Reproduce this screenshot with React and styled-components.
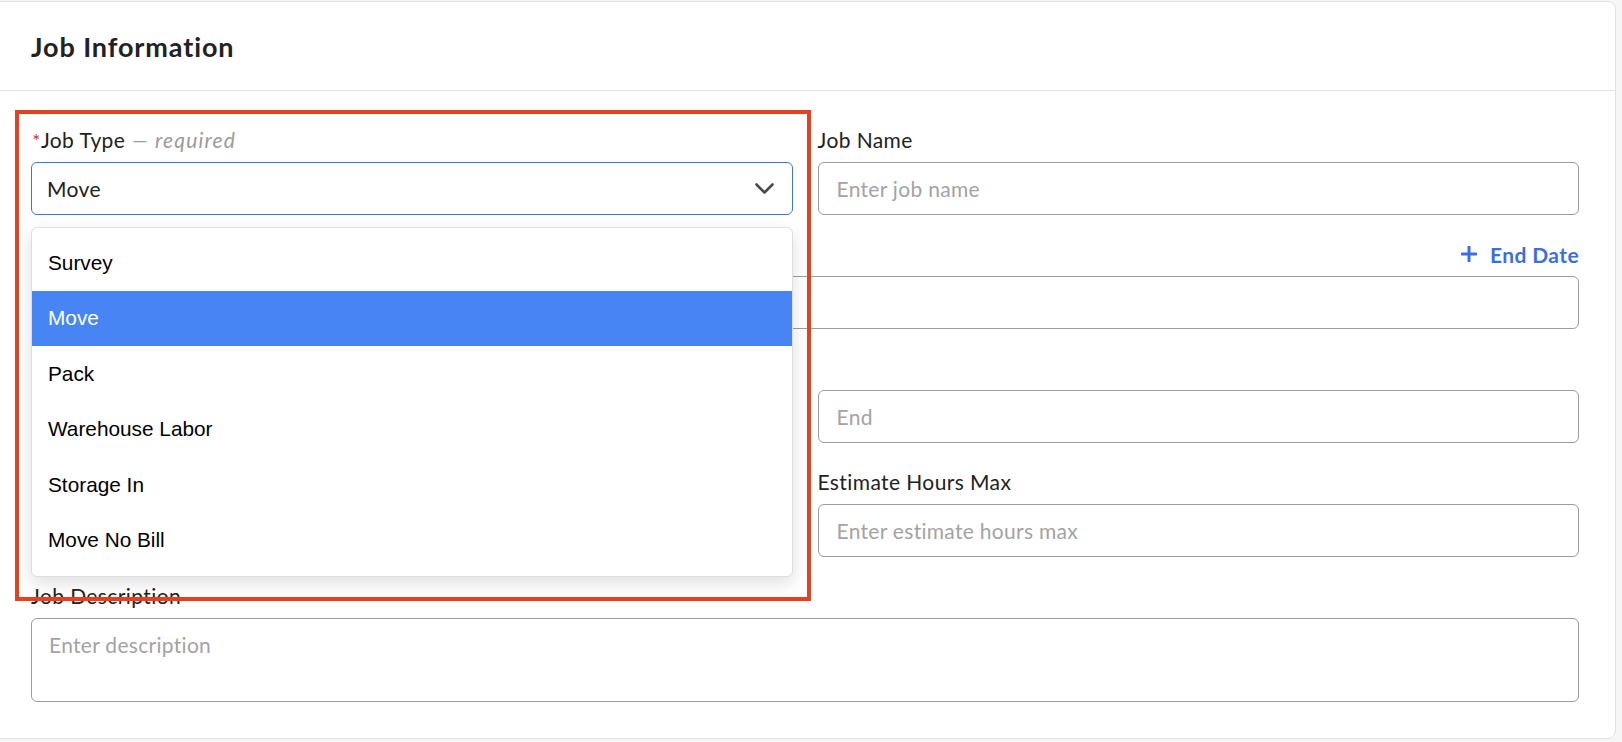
import React from 'react';
import styled, { createGlobalStyle } from 'styled-components';

const GlobalStyle = createGlobalStyle`
  body {
    margin: 0;
    background: #f6f6f6;
    font-family: Lato, 'Open Sans', sans-serif;
    color: #222;
  }
`;

const Card = styled.div`
  margin: 1px 6px 4px -8px;
  background: #ffffff;
  border: 1px solid #e1e1e1;
  border-radius: 8px;
`;

const Header = styled.div`
  height: 88px;
  display: flex;
  align-items: center;
  padding-left: 38px;
  border-bottom: 1px solid #e3e3e3;
`;

const Title = styled.h2`
  margin: 0;
  font-size: 27px;
  font-weight: 700;
  letter-spacing: 0.9px;
  color: #222;
`;

const Body = styled.div`
  padding: 38px 36px 36px 38px;
  display: flex;
  flex-direction: column;
  gap: 28px;
`;

const Row = styled.div`
  display: grid;
  grid-template-columns: ${props => (props.full ? '1fr' : '1fr 1fr')};
  column-gap: 25px;
`;

const Field = styled.div`
  display: flex;
  flex-direction: column;
  position: relative;
`;

const LabelRow = styled.div`
  display: flex;
  justify-content: space-between;
  align-items: center;
  height: 22px;
  margin-bottom: 11px;
`;

const Label = styled.label`
  font-size: 21px;
  line-height: 22px;
  letter-spacing: 0.4px;
  color: #222;
`;

const Star = styled.span`
  color: #c9423a;
  font-size: 20px;
  margin-left: 1px;
`;

const Hint = styled.em`
  color: #9b9b9b;
  margin-left: 7px;
  letter-spacing: 1.2px;
`;

const AddLink = styled.a`
  display: flex;
  align-items: center;
  gap: 13px;
  color: #3a6fdf;
  font-size: 21px;
  font-weight: 700;
  letter-spacing: 0.4px;
  text-decoration: none;
`;

const Input = styled.input`
  box-sizing: border-box;
  height: 53px;
  width: 100%;
  padding: 0 18px;
  border: 1px solid #9c9c9c;
  border-radius: 6px;
  font-family: Lato, sans-serif;
  font-size: 21px;
  letter-spacing: 0.3px;
  color: #222;
  background: #fff;
  outline: none;
  &::placeholder {
    color: #a3a3a3;
  }
`;

const TextArea = styled.textarea`
  box-sizing: border-box;
  height: 84px;
  width: 100%;
  padding: 13px 17px;
  border: 1px solid #9c9c9c;
  border-radius: 6px;
  font-family: Lato, sans-serif;
  font-size: 21px;
  letter-spacing: 0.3px;
  line-height: 26px;
  resize: none;
  outline: none;
  &::placeholder {
    color: #a3a3a3;
  }
`;

const SelectWrap = styled.div`
  position: relative;
`;

const SelectBox = styled.div`
  box-sizing: border-box;
  height: 53px;
  display: flex;
  align-items: center;
  justify-content: space-between;
  padding: 0 18px 0 15px;
  border: 1px solid #3d74e0;
  border-radius: 6px;
  font-size: 21px;
  letter-spacing: 0.4px;
  color: #222;
`;

const Menu = styled.ul`
  position: absolute;
  top: calc(100% + 12px);
  left: 0;
  right: 0;
  margin: 0;
  padding: 7px 0 8px;
  list-style: none;
  background: #fff;
  border: 1px solid #dedede;
  border-radius: 6px;
  box-shadow: 0 6px 18px rgba(0, 0, 0, 0.13);
  z-index: 10;
`;

const Option = styled.li`
  height: 55.5px;
  display: flex;
  align-items: center;
  padding-left: 16px;
  font-family: 'Liberation Sans', Arial, sans-serif;
  font-size: 20.8px;
  color: ${props => (props.active ? '#ffffff' : '#000000')};
  background: ${props => (props.active ? '#4785f4' : 'transparent')};
`;

const Highlight = styled.div`
  position: absolute;
  top: -19px;
  left: -16px;
  width: 796px;
  height: 491px;
  box-sizing: border-box;
  border: 4px solid #e5401f;
  pointer-events: none;
  z-index: 20;
`;

const options = ['Survey', 'Move', 'Pack', 'Warehouse Labor', 'Storage In', 'Move No Bill'];

const Chevron = () => (
  <svg width="19" height="11" viewBox="0 0 19 11" fill="none">
    <polyline points="1.5,1.5 9.5,9.5 17.5,1.5" stroke="#4a4a4a" strokeWidth="2.6" strokeLinecap="round" strokeLinejoin="round" />
  </svg>
);

const Plus = () => (
  <svg width="16" height="16" viewBox="0 0 16 16">
    <path d="M8 1v14M1 8h14" stroke="#3a6fdf" strokeWidth="3" strokeLinecap="round" />
  </svg>
);

const App = () => (
  <>
    <GlobalStyle />
    <Card>
      <Header>
        <Title>Job Information</Title>
      </Header>
      <Body>
        <Row>
          <Field>
            <Highlight />
            <LabelRow>
              <Label>
                <Star>*</Star>Job Type<Hint>— required</Hint>
              </Label>
            </LabelRow>
            <SelectWrap>
              <SelectBox>
                <span>Move</span>
                <Chevron />
              </SelectBox>
              <Menu>
                {options.map(option => (
                  <Option key={option} active={option === 'Move'}>
                    {option}
                  </Option>
                ))}
              </Menu>
            </SelectWrap>
          </Field>
          <Field>
            <LabelRow>
              <Label>Job Name</Label>
            </LabelRow>
            <Input placeholder="Enter job name" />
          </Field>
        </Row>
        <Row full>
          <Field>
            <LabelRow>
              <Label>Date</Label>
              <AddLink href="#">
                <Plus />
                End Date
              </AddLink>
            </LabelRow>
            <Input />
          </Field>
        </Row>
        <Row>
          <Field>
            <LabelRow>
              <Label>Arrival Window</Label>
            </LabelRow>
            <Input placeholder="Start" />
          </Field>
          <Field>
            <LabelRow />
            <Input placeholder="End" />
          </Field>
        </Row>
        <Row>
          <Field>
            <LabelRow>
              <Label>Estimate Hours Min</Label>
            </LabelRow>
            <Input placeholder="Enter estimate hours min" />
          </Field>
          <Field>
            <LabelRow>
              <Label>Estimate Hours Max</Label>
            </LabelRow>
            <Input placeholder="Enter estimate hours max" />
          </Field>
        </Row>
        <Row full>
          <Field>
            <LabelRow>
              <Label>Job Description</Label>
            </LabelRow>
            <TextArea placeholder="Enter description" />
          </Field>
        </Row>
      </Body>
    </Card>
  </>
);

export default App;
